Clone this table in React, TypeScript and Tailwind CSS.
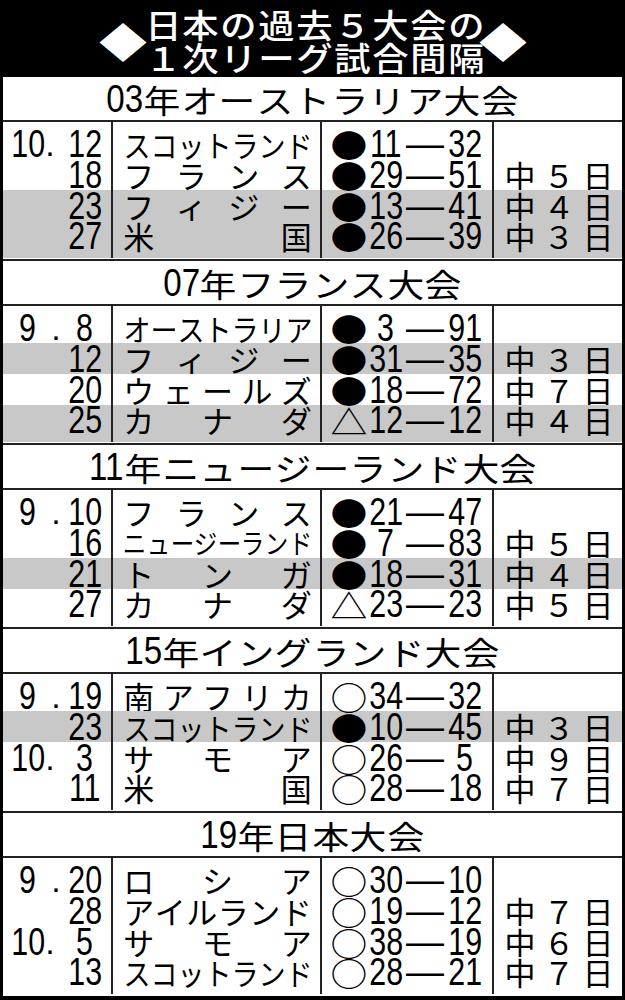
import React from "react";

const CJK = "font-['Noto_Sans_CJK_JP',sans-serif]";
const NUM = "font-['Liberation_Sans',sans-serif]";

type Row = {
  m?: string;
  d: string;
  team: string;
  r: string;
  a: string;
  b: string;
  gap?: string;
  gray?: boolean;
};
type Section = { y: string; name: string; rows: Row[] };

const sections: Section[] = [
  {
    y: "03",
    name: "年オーストラリア大会",
    rows: [
      { m: "10", d: "12", team: "スコットランド", r: "●", a: "11", b: "32" },
      { d: "18", team: "フランス", r: "●", a: "29", b: "51", gap: "５" },
      { d: "23", team: "フィジー", r: "●", a: "13", b: "41", gap: "４", gray: true },
      { d: "27", team: "米国", r: "●", a: "26", b: "39", gap: "３", gray: true },
    ],
  },
  {
    y: "07",
    name: "年フランス大会",
    rows: [
      { m: "9", d: "8", team: "オーストラリア", r: "●", a: "3", b: "91" },
      { d: "12", team: "フィジー", r: "●", a: "31", b: "35", gap: "３", gray: true },
      { d: "20", team: "ウェールズ", r: "●", a: "18", b: "72", gap: "７" },
      { d: "25", team: "カナダ", r: "△", a: "12", b: "12", gap: "４", gray: true },
    ],
  },
  {
    y: "11",
    name: "年ニュージーランド大会",
    rows: [
      { m: "9", d: "10", team: "フランス", r: "●", a: "21", b: "47" },
      { d: "16", team: "ニュージーランド", r: "●", a: "7", b: "83", gap: "５" },
      { d: "21", team: "トンガ", r: "●", a: "18", b: "31", gap: "４", gray: true },
      { d: "27", team: "カナダ", r: "△", a: "23", b: "23", gap: "５" },
    ],
  },
  {
    y: "15",
    name: "年イングランド大会",
    rows: [
      { m: "9", d: "19", team: "南アフリカ", r: "○", a: "34", b: "32" },
      { d: "23", team: "スコットランド", r: "●", a: "10", b: "45", gap: "３", gray: true },
      { m: "10", d: "3", team: "サモア", r: "○", a: "26", b: "5", gap: "９" },
      { d: "11", team: "米国", r: "○", a: "28", b: "18", gap: "７" },
    ],
  },
  {
    y: "19",
    name: "年日本大会",
    rows: [
      { m: "9", d: "20", team: "ロシア", r: "○", a: "30", b: "10" },
      { d: "28", team: "アイルランド", r: "○", a: "19", b: "12", gap: "７" },
      { m: "10", d: "5", team: "サモア", r: "○", a: "38", b: "19", gap: "６" },
      { d: "13", team: "スコットランド", r: "○", a: "28", b: "21", gap: "７" },
    ],
  },
];

function Num({ t, w }: { t: string; w: string }) {
  return (
    <span className={`flex h-[30px] justify-center ${w}`}>
      <span className={`inline-block ${NUM} text-[38px] leading-[30px] scale-x-[0.8]`}>{t}</span>
    </span>
  );
}

function Team({ name }: { name: string }) {
  const chars = [...name];
  if (chars.length >= 8) {
    return (
      <div className="flex w-full justify-between text-[27px] leading-[30px]">
        {chars.map((c, i) => (
          <span key={i} className="flex w-[23.5px] justify-center">
            <span className="inline-block scale-x-[0.87]">{c}</span>
          </span>
        ))}
      </div>
    );
  }
  if (chars.length === 7) {
    return (
      <div className="flex w-full justify-between text-[30px] leading-[30px]">
        {chars.map((c, i) => (
          <span key={i} className="flex w-[27px] justify-center">
            <span className="inline-block scale-x-[0.9]">{c}</span>
          </span>
        ))}
      </div>
    );
  }
  return (
    <div className="flex w-full justify-between text-[31px] leading-[30px]">
      {chars.map((c, i) => (
        <span key={i} className="flex w-[31.5px] justify-center">
          <span className="inline-block">{c}</span>
        </span>
      ))}
    </div>
  );
}

function DataRow({ row, idx }: { row: Row; idx: number }) {
  const h =
    idx === 0
      ? "h-[37px] pt-[7px]"
      : idx === 3
      ? "flex-1 pb-[7px]"
      : "h-[31px]";
  const bg = row.gray ? "bg-[#c8c8c8]" : "bg-white";
  const cell = "border-r-2 border-[#222]";
  return (
    <div className={`grid grid-cols-[110px_209px_172px_1fr] ${bg}`}>
      <div className={`${cell} ${h} flex items-center justify-between pl-[7px] pr-[8px]`}>
        <div className="flex items-center">
          {row.m && (
            <>
              <Num t={row.m} w="w-[36px]" />
              <span
                className={`flex h-[30px] justify-center ${NUM} text-[34px] leading-[30px] ${
                  row.m === "9" ? "w-[20px]" : "w-[8px]"
                }`}
              >
                .
              </span>
            </>
          )}
        </div>
        <Num t={row.d} w="w-[36px]" />
      </div>
      <div className={`${cell} ${h} flex items-center pl-[10px] pr-[8px] ${CJK}`}>
        <Team name={row.team} />
      </div>
      <div className={`${cell} ${h} flex items-center pl-[10px]`}>
        <span className={`flex h-[30px] w-[35px] justify-center ${CJK} text-[32px] leading-[30px]`}>
          <span className="inline-block scale-x-[1.15]">{row.r}</span>
        </span>
        <Num t={row.a} w="w-[38px]" />
        <span className={`flex h-[30px] w-[40px] justify-center ${NUM} text-[38px] leading-[30px]`}>—</span>
        <Num t={row.b} w="w-[40px]" />
      </div>
      <div className={`${h} flex items-center justify-between pl-[10px] pr-[8px] ${CJK} text-[31px] leading-[30px]`}>
        {row.gap &&
          ["中", row.gap, "日"].map((c, i) => (
            <span key={i} className="flex w-[32px] justify-center">
              <span className="inline-block">{c}</span>
            </span>
          ))}
      </div>
    </div>
  );
}

function TitleLine({ text }: { text: string }) {
  return (
    <div className="flex h-[33px] justify-between">
      {[...text].map((c, i) => (
        <span key={i} className="flex w-[37px] justify-center">
          <span className="inline-block scale-x-[1.1]">{c}</span>
        </span>
      ))}
    </div>
  );
}

export default function App() {
  return (
    <div className={`flex h-[1000px] w-[625px] flex-col bg-black ${CJK} text-black`}>
      <div className="flex h-[77px] items-center justify-center pt-[4px] text-white">
        <span className="flex h-[36px] w-[36px] items-center justify-center text-[40px] leading-[36px]">
          <span className="inline-block scale-x-[1.2]">◆</span>
        </span>
        <div className="ml-[4px] flex w-[340px] flex-col text-[33px] font-medium leading-[33px]">
          <TitleLine text="日本の過去５大会の" />
          <TitleLine text="１次リーグ試合間隔" />
        </div>
        <span className="flex h-[36px] w-[36px] items-center justify-center text-[40px] leading-[36px]">
          <span className="inline-block scale-x-[1.2]">◆</span>
        </span>
      </div>
      <div className="mx-[3px] mb-[4px] flex flex-1 flex-col bg-white">
        {sections.map((s, si) => (
          <React.Fragment key={si}>
            <div className="flex h-[45px] items-center justify-center border-b-2 border-[#222] text-[32px] leading-[36px]">
              <span className="flex w-[37px] justify-center">
                <span className={`inline-block ${NUM} text-[39px] leading-[36px] scale-x-[0.85]`}>{s.y}</span>
              </span>
              {[...s.name].map((c, i) => (
                <span key={i} className="flex w-[37.5px] justify-center">
                  <span className="inline-block scale-x-[1.15]">{c}</span>
                </span>
              ))}
            </div>
            <div
              className={`flex flex-col ${
                si === sections.length - 1 ? "flex-1" : "h-[139px] border-b-2 border-[#222]"
              }`}
            >
              {s.rows.map((r, ri) => (
                <DataRow key={ri} row={r} idx={ri} />
              ))}
            </div>
          </React.Fragment>
        ))}
      </div>
    </div>
  );
}
